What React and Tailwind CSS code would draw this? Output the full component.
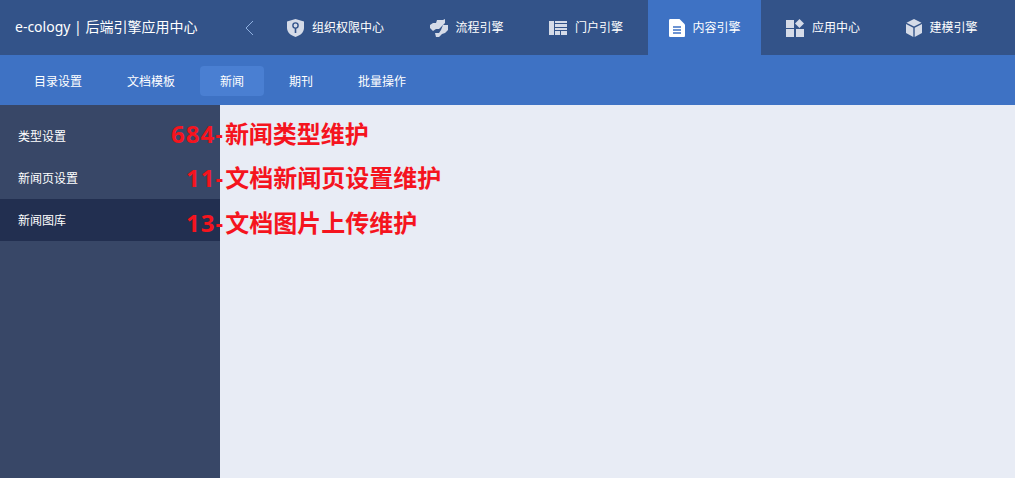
import React from "react";

const ShieldIcon = () => (
  <svg width="17" height="18" viewBox="0 0 17 18">
    <path d="M8.5 0 L17 2.5 V9 C17 13.5 13 16.5 8.5 18 C4 16.5 0 13.5 0 9 V2.5 Z" fill="#d5dbe8" />
    <circle cx="8.5" cy="6.5" r="2.6" fill="none" stroke="#33538a" strokeWidth="1.4" />
    <path d="M8.5 9 V14" stroke="#33538a" strokeWidth="1.6" />
  </svg>
);

const FlowIcon = () => (
  <svg width="18" height="18" viewBox="0 0 18 18" fill="#d5dbe8">
    <path d="M7 1 H13 L15 0 V4 L12 7 L9 10 H6 L3 12 L0 9 V6 L3 4 H6 Z" />
    <path d="M13 6 H18 V11 L15 14 L12 15 L9 18 H6 L5 14 H9 L11 11 Z" />
  </svg>
);

const PortalIcon = () => (
  <svg width="18" height="14" viewBox="0 0 18 14" fill="#d5dbe8">
    <rect x="0" y="0" width="5" height="14" />
    <rect x="6" y="0" width="12" height="2" />
    <rect x="6" y="3" width="12" height="3" />
    <rect x="6" y="7" width="12" height="2" />
    <rect x="6" y="10" width="5" height="4" />
    <rect x="12" y="10" width="6" height="4" />
  </svg>
);

const DocIcon = () => (
  <svg width="16" height="18" viewBox="0 0 16 18">
    <path d="M1.5 0 H10.5 L16 5.5 V16.5 C16 17.5 15.5 18 14.5 18 H1.5 C0.5 18 0 17.5 0 16.5 V1.5 C0 0.5 0.5 0 1.5 0 Z" fill="#ffffff" />
    <path d="M4 8 H12 M4 11 H12 M4 14 H12" stroke="#3e72c4" strokeWidth="1.3" />
  </svg>
);

const AppIcon = () => (
  <svg width="18" height="18" viewBox="0 0 18 18" fill="#d5dbe8">
    <rect x="0" y="1" width="8" height="8" />
    <rect x="0" y="10" width="8" height="8" />
    <rect x="10" y="10" width="8" height="8" />
    <path d="M13.5 0 L18 4.5 L13.5 9 L9 4.5 Z" />
  </svg>
);

const CubeIcon = () => (
  <svg width="16" height="18" viewBox="0 0 16 18" fill="#d5dbe8">
    <path d="M8 0 L15.5 3.8 L8 7.6 L0.5 3.8 Z" />
    <path d="M0 5 L7.3 8.8 V18 L0 14 Z" />
    <path d="M16 5 L8.7 8.8 V18 L16 14 Z" />
  </svg>
);

const topTabs = [
  { label: "组织权限中心", icon: <ShieldIcon /> },
  { label: "流程引擎", icon: <FlowIcon /> },
  { label: "门户引擎", icon: <PortalIcon /> },
  { label: "内容引擎", icon: <DocIcon />, active: true },
  { label: "应用中心", icon: <AppIcon /> },
  { label: "建模引擎", icon: <CubeIcon /> },
];

const subTabs = [
  { label: "目录设置" },
  { label: "文档模板" },
  { label: "新闻", active: true },
  { label: "期刊" },
  { label: "批量操作" },
];

const sideItems = [
  { label: "类型设置", num: "684", note: "新闻类型维护", pos: "left-[171px] top-[1px]" },
  { label: "新闻页设置", num: "11", note: "文档新闻页设置维护", pos: "left-[186px] top-[3px]" },
  { label: "新闻图库", num: "13", note: "文档图片上传维护", pos: "left-[186px] top-[6px]", active: true },
];

export default function App() {
  return (
    <div className="flex h-[478px] w-[1015px] flex-col overflow-hidden font-['Noto_Sans','Noto_Sans_CJK_SC',sans-serif] text-xs text-white">
      <header className="flex h-[55px] items-center bg-[#335389]">
        <div className="w-[244px] pl-[15px] text-[14px]">e-cology | 后端引擎应用中心</div>
        <svg width="10" height="16" viewBox="0 0 10 16" fill="none" stroke="#8fb0e0" strokeWidth="1">
          <path d="M9 1 L2 8 L9 15" />
        </svg>
        <nav className="ml-[12px] flex h-full gap-[4.5px]">
          {topTabs.map((tab) => (
            <div
              key={tab.label}
              className={`flex items-center gap-[8px] pl-[21px] pr-[20px] ${tab.active ? "bg-[#3e72c4]" : ""}`}
            >
              {tab.icon}
              <span>{tab.label}</span>
            </div>
          ))}
        </nav>
      </header>

      <div className="flex h-[50px] items-center gap-[5px] bg-[#3e72c4] pl-[14px] pt-[2px]">
        {subTabs.map((tab) => (
          <div
            key={tab.label}
            className={`flex h-[30px] items-center rounded px-5 pt-[2px] ${tab.active ? "bg-[#4a7fd2]" : ""}`}
          >
            {tab.label}
          </div>
        ))}
      </div>

      <div className="flex flex-1">
        <aside className="w-[220px] bg-[#384767] pt-[10px]">
          {sideItems.map((item) => (
            <div
              key={item.label}
              className={`relative flex h-[42px] items-center pl-[18px] pt-[2px] ${item.active ? "bg-[#222f50]" : ""}`}
            >
              {item.label}
              <span className={`absolute whitespace-nowrap text-[24px] font-bold leading-[36px] text-[#f5141e] ${item.pos}`}>
                <span className="tracking-[1px]">{item.num}</span>
                <span className="mr-[2px]">-</span>
                {item.note}
              </span>
            </div>
          ))}
        </aside>
        <main className="flex-1 bg-[#e8ecf5]" />
      </div>
    </div>
  );
}
